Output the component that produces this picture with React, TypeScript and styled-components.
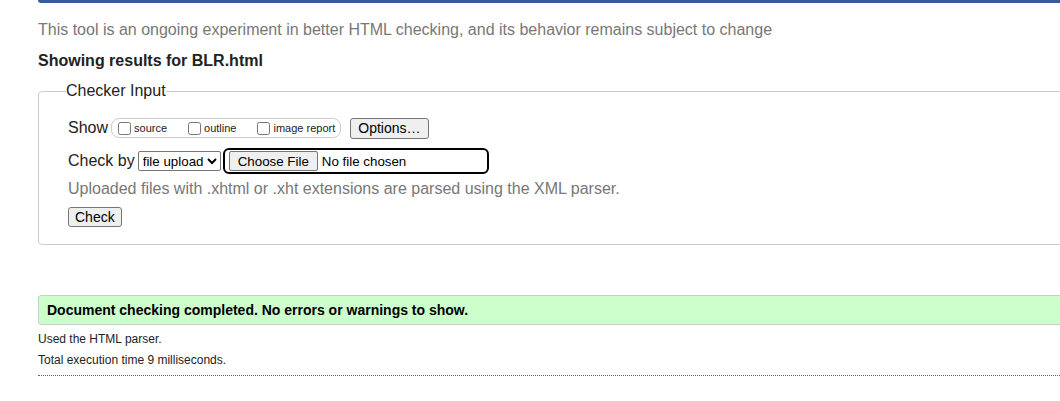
import { FC } from "react";
import styled, { createGlobalStyle } from "styled-components";

const GlobalStyle = createGlobalStyle`
    html, body {
        margin: 0;
        padding: 0;
        overflow: hidden;
        background: #fff;
    }
    body {
        font-family: "Liberation Sans", Arial, sans-serif;
        color: #222;
    }
`

const Page = styled.div`
    width: 1100px;
    padding-left: 38px;
`
const TopBar = styled.div`
    height: 3px;
    background: #365d96;
    border-bottom-left-radius: 6px;
`
const Intro = styled.p`
    margin: 18px 0 0;
    font-size: 16px;
    line-height: 18px;
    color: #777;
`
const Heading = styled.h2`
    margin: 13px 0 0;
    font-size: 16px;
    line-height: 18px;
    font-weight: bold;
    color: #222;
`
const Fieldset = styled.fieldset`
    margin: 12px 0 0;
    padding: 16px 0 17px 29px;
    border: 1px solid #ccc;
    border-radius: 4px;
    display: flex;
    flex-direction: column;
    align-items: flex-start;
`
const Legend = styled.legend`
    padding: 0;
    margin-left: -2px;
    font-size: 16px;
    line-height: 18px;
    color: #222;
`
const Row = styled.div<{ $h: number; $gap?: number }>`
    display: flex;
    align-items: center;
    height: ${p => p.$h}px;
    margin-top: ${p => p.$gap ?? 0}px;
    font-size: 16px;
    color: #222;
`
const Label = styled.span`
    margin-right: 3px;
`
const OptionGroup = styled.span`
    display: inline-flex;
    align-items: center;
    height: 18px;
    padding: 0 5px 0 1px;
    border: 1px solid #ccc;
    border-radius: 8px;
    margin-right: 9px;

    label {
        display: inline-flex;
        align-items: center;
        font-size: 11px;
        margin-right: 16px;
        color: #222;
    }
    label:last-child {
        margin-right: 0;
    }
    input {
        width: 13px;
        height: 13px;
        margin: 0 3px 0 5px;
    }
`
const Button = styled.button`
    font-family: "Liberation Sans", Arial, sans-serif;
    font-size: 14px;
    color: #000;
    background: #efefef;
    border: 1px solid #767676;
    border-radius: 3px;
    padding: 0 7px;
    height: 21px;
`
const Select = styled.select`
    font-family: "Liberation Sans", Arial, sans-serif;
    font-size: 13.33px;
    color: #000;
    height: 20px;
    border: 1px solid #767676;
    border-radius: 2px;
    background: #fff;
    padding: 0;
    margin-right: 2px;
`
const FileBox = styled.span`
    display: inline-flex;
    align-items: center;
    width: 258px;
    height: 22px;
    border: 2px solid #000;
    border-radius: 6px;
    padding-left: 4px;

    input {
        font-family: "Liberation Sans", Arial, sans-serif;
        font-size: 13.33px;
        color: #000;
    }
    input::file-selector-button {
        font-family: "Liberation Sans", Arial, sans-serif;
        font-size: 13.33px;
        height: 20px;
        padding: 0 8px;
        background: #efefef;
        border: 1px solid #767676;
        border-radius: 2px;
        margin-right: 4px;
    }
`
const Note = styled.p`
    margin: 5px 0 0;
    font-size: 16px;
    line-height: 18px;
    color: #777;
`
const CheckButton = styled(Button)`
    margin-top: 9px;
    height: 20px;
    padding: 0 6px;
`
const Success = styled.p`
    margin: 50px 0 0;
    height: 28px;
    display: flex;
    align-items: center;
    padding-left: 8px;
    background: #ccffcc;
    border: 1px solid #ccc;
    border-radius: 3px;
    font-size: 14px;
    font-weight: bold;
    color: #000;
`
const Details = styled.div`
    margin-top: 4px;
    font-size: 12px;
    line-height: 21px;
    color: #222;

    p {
        margin: 0;
    }
`
const Rule = styled.hr`
    margin: 4px 0 0;
    border: 0;
    border-top: 1px dotted #666;
`

const App: FC = () => {
    return (
        <>
            <GlobalStyle />
            <Page>
                <TopBar />
                <Intro>This tool is an ongoing experiment in better HTML checking, and its behavior remains subject to change</Intro>
                <Heading>Showing results for BLR.html</Heading>

                <Fieldset>
                    <Legend>Checker Input</Legend>

                    <Row $h={24}>
                        <Label>Show</Label>
                        <OptionGroup>
                            <label><input type="checkbox" />source</label>
                            <label><input type="checkbox" />outline</label>
                            <label><input type="checkbox" />image report</label>
                        </OptionGroup>
                        <Button>Options…</Button>
                    </Row>

                    <Row $h={28} $gap={7}>
                        <Label>Check by</Label>
                        <Select defaultValue="file">
                            <option value="address">address</option>
                            <option value="file">file upload</option>
                            <option value="text">text input</option>
                        </Select>
                        <FileBox>
                            <input type="file" />
                        </FileBox>
                    </Row>

                    <Note>Uploaded files with .xhtml or .xht extensions are parsed using the XML parser.</Note>
                    <CheckButton>Check</CheckButton>
                </Fieldset>

                <Success>Document checking completed. No errors or warnings to show.</Success>
                <Details>
                    <p>Used the HTML parser.</p>
                    <p>Total execution time 9 milliseconds.</p>
                </Details>
                <Rule />
            </Page>
        </>
    )
}

export default App;
